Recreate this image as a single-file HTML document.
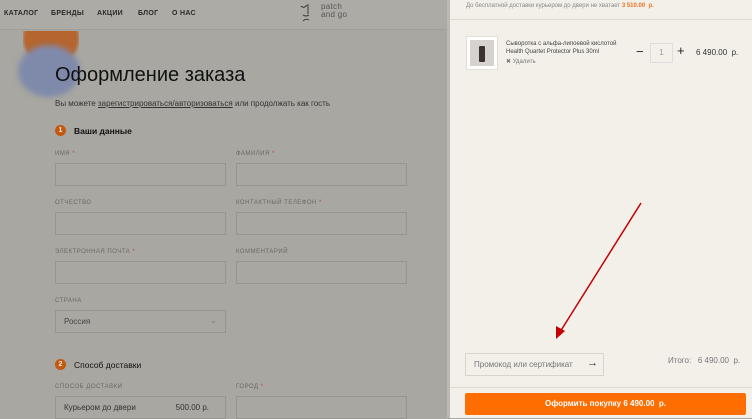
<!DOCTYPE html>
<html><head><meta charset="utf-8"><style>
*{margin:0;padding:0;box-sizing:border-box}
body{width:752px;height:418px;overflow:hidden;font-family:"Liberation Sans",sans-serif;background:#a8a7a1;position:relative}
.a{position:absolute}
.nav{left:0;top:0;width:447px;height:30px;background:#acaba5;border-bottom:1px solid #9f9e98}
.nav span{position:absolute;top:10px;font-size:7px;font-weight:bold;color:#2a2a2a;letter-spacing:.3px}
.lbl{font-size:6px;color:#6a6964;letter-spacing:.5px}
.inp{border:1px solid #96958f;height:23px;width:171px}
.r{left:450px;top:0;width:302px;height:418px;background:#f3f0ea}
</style></head><body>
<div class="a nav">
<span style="left:4px">КАТАЛОГ</span><span style="left:51px">БРЕНДЫ</span><span style="left:97px">АКЦИИ</span><span style="left:138px">БЛОГ</span><span style="left:172px">О НАС</span>
<svg style="position:absolute;left:299px;top:2px" width="14" height="22"><path d="M2 4 Q5 7 8 3 M9 2 V12 M4 13 Q7 15 10 13 M4 19 Q7 16 10 18" stroke="#333" stroke-width="0.9" fill="none"/></svg>
<span style="left:321px;top:3px;font-weight:normal;font-size:8px;line-height:8px;color:#555">patch<br>and go</span>
</div>
<div class="a" style="left:23px;top:10px;width:56px;height:56px;background:#b5652e;border-radius:50%;filter:blur(1.5px);clip-path:inset(21px 0 0 0)"></div>
<div class="a" style="left:18px;top:45px;width:62px;height:52px;background:#7f8aab;border-radius:50%;filter:blur(3px)"></div>
<div class="a" style="left:55px;top:64px;font-size:20px;color:#111">Оформление заказа</div>
<div class="a" style="left:55px;top:99px;font-size:8px;color:#333">Вы можете <u>зарегистрироваться/авторизоваться</u> или продолжать как гость</div>
<div class="a" style="left:55px;top:125px;width:11px;height:11px;border-radius:50%;background:#c4580f;color:#eee;font-size:7px;text-align:center;line-height:11px;font-weight:bold">1</div>
<div class="a" style="left:74px;top:126px;font-size:8.5px;color:#111;font-weight:bold">Ваши данные</div>
<div class="a lbl" style="left:55px;top:151px">ИМЯ <span style="color:#b44">*</span></div>
<div class="a lbl" style="left:236px;top:151px">ФАМИЛИЯ <span style="color:#b44">*</span></div>
<div class="a inp" style="left:55px;top:163px"></div><div class="a inp" style="left:236px;top:163px"></div>
<div class="a lbl" style="left:55px;top:200px">ОТЧЕСТВО</div>
<div class="a lbl" style="left:236px;top:200px">КОНТАКТНЫЙ ТЕЛЕФОН <span style="color:#b44">*</span></div>
<div class="a inp" style="left:55px;top:212px"></div><div class="a inp" style="left:236px;top:212px"></div>
<div class="a lbl" style="left:55px;top:249px">ЭЛЕКТРОННАЯ ПОЧТА <span style="color:#b44">*</span></div>
<div class="a lbl" style="left:236px;top:249px">КОММЕНТАРИЙ</div>
<div class="a inp" style="left:55px;top:261px"></div><div class="a inp" style="left:236px;top:261px"></div>
<div class="a lbl" style="left:55px;top:298px">СТРАНА</div>
<div class="a inp" style="left:55px;top:310px;font-size:8px;color:#444;padding:6px 8px">Россия<span style="position:absolute;right:8px;top:5px;color:#777">&#x2304;</span></div>
<div class="a" style="left:55px;top:359px;width:11px;height:11px;border-radius:50%;background:#c4580f;color:#eee;font-size:7px;text-align:center;line-height:11px;font-weight:bold">2</div>
<div class="a" style="left:74px;top:360px;font-size:8.5px;color:#111">Способ доставки</div>
<div class="a lbl" style="left:55px;top:384px">СПОСОБ ДОСТАВКИ</div>
<div class="a lbl" style="left:236px;top:384px">ГОРОД <span style="color:#b44">*</span></div>
<div class="a inp" style="left:55px;top:396px;font-size:8px;color:#333;padding:6px 8px">Курьером до двери<span style="position:absolute;right:16px;top:6px">500.00 р.</span></div>
<div class="a inp" style="left:236px;top:396px"></div>
<div class="a" style="left:447px;top:0;width:3px;height:418px;background:#bbb9b3"></div>
<div class="a r">
<div class="a" style="left:16px;top:3px;font-size:6px;color:#888">До бесплатной доставки курьером до двери не хватает <b style="color:#f07020">3 510.00 &nbsp;р.</b></div>
<div class="a" style="left:0;top:19px;width:302px;height:1px;background:#dedad2"></div>
<div class="a" style="left:16px;top:36px;width:32px;height:34px;background:#fff;border:1px solid #e4e0d8"><div style="margin:3px;width:24px;height:26px;background:#d6d3cf;position:relative"><div style="position:absolute;left:9px;top:6px;width:6px;height:16px;background:#3a3430;border-radius:1px"></div></div></div>
<div class="a" style="left:56px;top:40px;font-size:6px;color:#444;line-height:8px">Сыворотка с альфа-липоевой кислотой<br>Health Quartet Protector Plus 30ml</div>
<div class="a" style="left:56px;top:58px;font-size:6px;color:#777">✖ Удалить</div>
<div class="a" style="left:186px;top:44px;font-size:13px;color:#222">−</div>
<div class="a" style="left:200px;top:43px;width:23px;height:20px;border:1px solid #ddd;font-size:8px;color:#999;text-align:center;line-height:18px">1</div>
<div class="a" style="left:227px;top:43px;font-size:13px;color:#222">+</div>
<div class="a" style="left:246px;top:48px;font-size:8px;color:#333">6 490.00 &nbsp;р.</div>
<div class="a" style="left:15px;top:353px;width:139px;height:23px;border:1px solid #d8d4cc;font-size:8px;color:#777;padding:6px 8px">Промокод или сертификат<span style="position:absolute;right:5px;top:3px;font-size:11px;color:#222">→</span></div>
<div class="a" style="left:218px;top:356px;font-size:8px;color:#777">Итого: &nbsp;&nbsp;6 490.00 &nbsp;р.</div>
<div class="a" style="left:0;top:387px;width:302px;height:1px;background:#dedad2"></div>
<div class="a" style="left:15px;top:393px;width:281px;height:22px;background:#ff6d00;border-radius:2px;color:#fff;font-size:8px;font-weight:bold;text-align:center;line-height:22px">Оформить покупку 6 490.00 &nbsp;р.</div>
</div>
<svg class="a" style="left:0;top:0" width="752" height="418"><line x1="641" y1="203" x2="560" y2="332" stroke="#c40000" stroke-width="1.5"/><polygon points="556,339 556,326 565,331" fill="#c40000"/></svg>
</body></html>
